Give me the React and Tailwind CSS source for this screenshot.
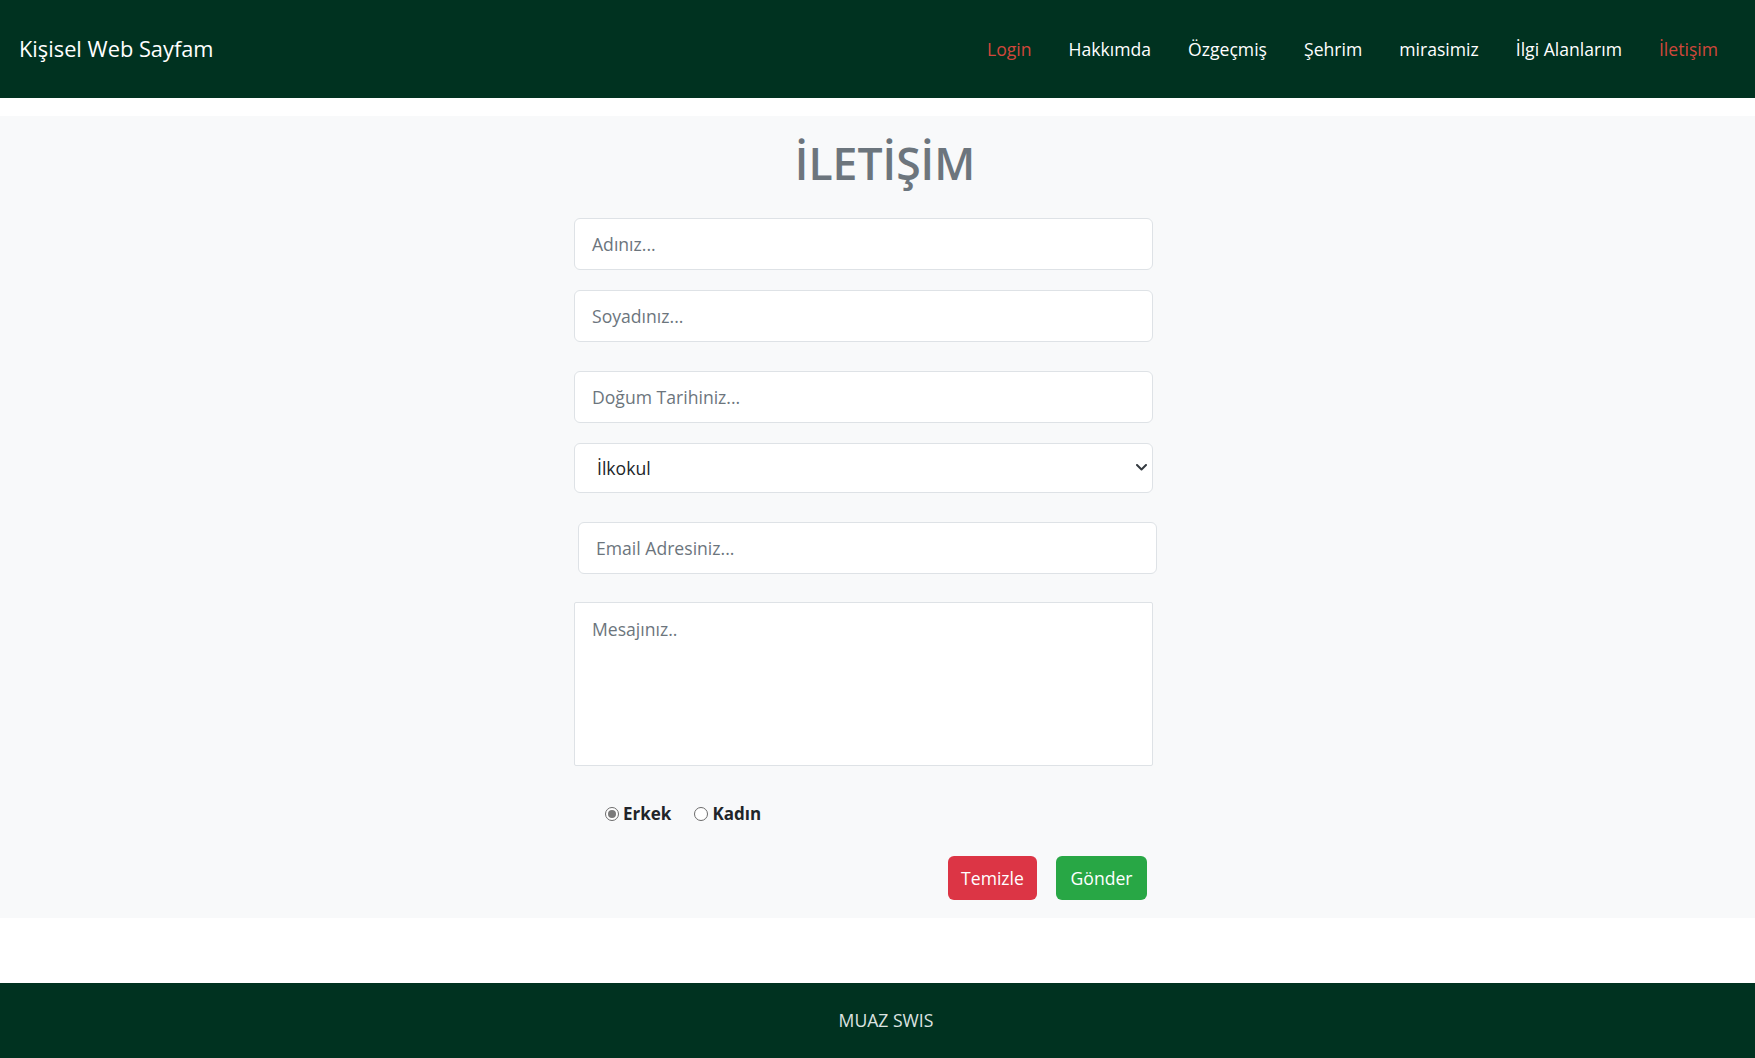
import React from "react";

const font = { fontFamily: '"Open Sans", "Noto Sans", "DejaVu Sans", sans-serif' };

function Field({ placeholder, className = "" }) {
  return (
    <div
      className={`h-[52px] w-[579px] rounded-[6px] border border-[#dee2e6] bg-white pl-[17px] flex items-center text-[17.6px] text-[#6c757d] ${className}`}
    >
      {placeholder}
    </div>
  );
}

function Radio({ checked, label }) {
  return (
    <div className="flex items-center">
      <span className="relative flex h-[14px] w-[14px] items-center justify-center rounded-full border border-[#6b6b6b] bg-white">
        {checked && <span className="h-[8px] w-[8px] rounded-full bg-[#7a7a7a]" />}
      </span>
      <span className="ml-[4px] text-[17px] font-bold leading-[26px] text-[#212529]">{label}</span>
    </div>
  );
}

export default function App() {
  const links = ["Login", "Hakkımda", "Özgeçmiş", "Şehrim", "mirasimiz", "İlgi Alanlarım", "İletişim"];
  return (
    <div style={font} className="flex min-h-[1058px] w-full flex-col bg-white">
      <header className="flex h-[98px] items-center justify-between bg-[#003220] pl-[19px] pr-[37px]">
        <div className="text-[21.8px] text-white">Kişisel Web Sayfam</div>
        <nav className="flex items-center gap-[37px] text-[17.6px]">
          {links.map((l, i) => (
            <span
              key={l}
              className={i === 0 || i === links.length - 1 ? "text-[#d0473b]" : "text-white"}
            >
              {l}
            </span>
          ))}
        </nav>
      </header>

      <main className="mt-[18px] flex flex-col bg-[#f8f9fa] pt-[21px] pb-[18px]">
        <h1 className="pl-[15px] text-center text-[44.5px] font-semibold leading-[52.8px] text-[#6c757d]">
          İLETİŞİM
        </h1>

        <form className="ml-[574px] mt-[28px] flex w-[579px] flex-col">
          <Field placeholder="Adınız..." />
          <Field placeholder="Soyadınız..." className="mt-[20px] h-[51px]" />
          <Field placeholder="Doğum Tarihiniz..." className="mt-[29px]" />
          <div className="mt-[20px] flex h-[50px] w-[579px] items-center justify-between rounded-[6px] border border-[#dee2e6] bg-white pl-[22px] pr-[5px] text-[17.6px] text-[#212529]">
            <span>İlkokul</span>
            <svg width="11" height="7" viewBox="0 0 11 7" fill="none">
              <polyline points="1,1 5.5,5.5 10,1" stroke="#343a40" strokeWidth="2" strokeLinecap="round" strokeLinejoin="round" />
            </svg>
          </div>
          <Field placeholder="Email Adresiniz..." className="ml-[4px] mt-[29px]" />
          <div className="mt-[28px] h-[164px] w-[579px] rounded-[2px] border border-[#dee2e6] bg-white pl-[17px] pt-[13px] text-[17.6px] text-[#6c757d]">
            Mesajınız..
          </div>

          <div className="mt-[35px] flex items-center gap-[23px] pl-[31px]">
            <Radio checked label="Erkek" />
            <Radio label="Kadın" />
          </div>

          <div className="mt-[29px] flex justify-end gap-[19px] pr-[6px]">
            <button type="button" className="flex h-[44px] w-[89px] items-center justify-center rounded-[6px] bg-[#dc3545] text-[17.6px] text-white">
              Temizle
            </button>
            <button type="button" className="flex h-[44px] w-[91px] items-center justify-center rounded-[6px] bg-[#28a745] text-[17.6px] text-white">
              Gönder
            </button>
          </div>
        </form>
      </main>

      <div className="h-[65px]" />

      <footer className="flex h-[75px] items-center justify-center bg-[#003220] pl-[17px] text-[17.6px] text-[#dde3e0]">
        MUAZ SWIS
      </footer>
    </div>
  );
}
